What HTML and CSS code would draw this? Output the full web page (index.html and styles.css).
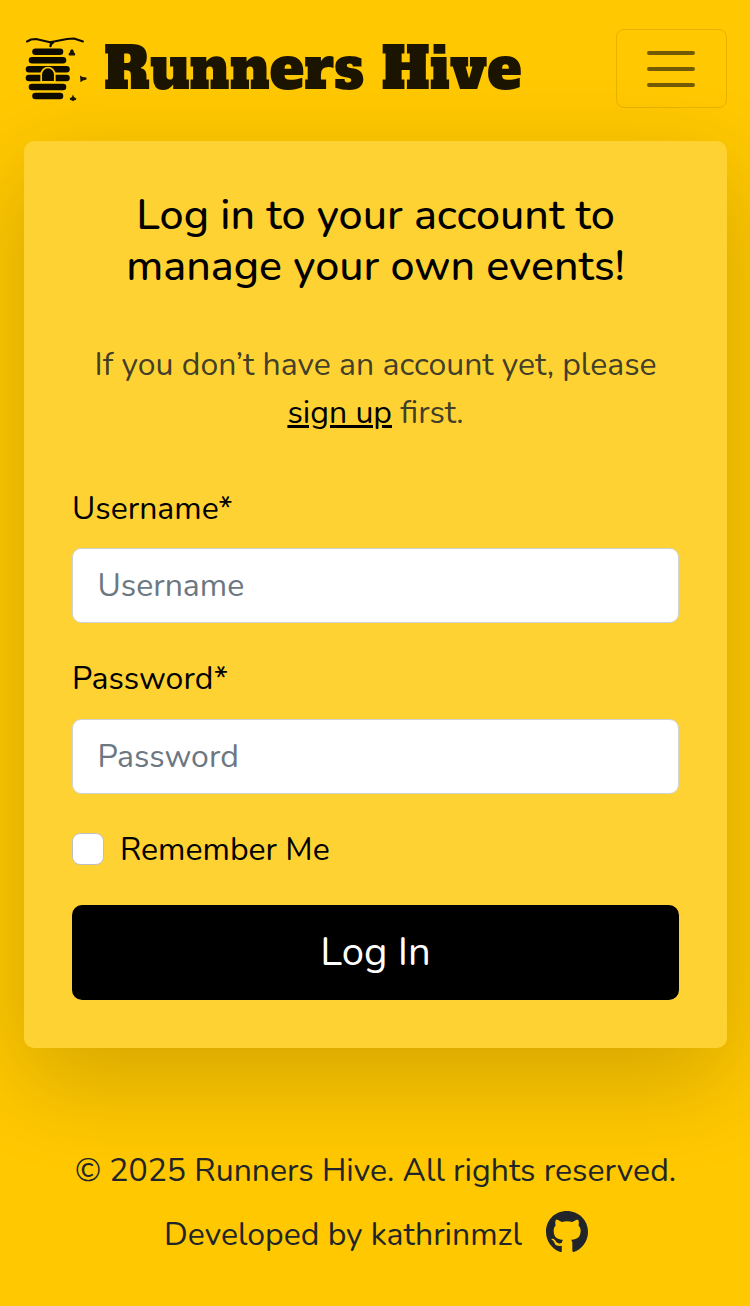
FILE: index.html
```html
<!DOCTYPE html>
<html lang="en">
<head>
<meta charset="utf-8">
<title>Runners Hive</title>
<link rel="stylesheet" href="styles.css">
</head>
<body>
<header class="navbar">
  <a class="brand">
    <svg class="hive" viewBox="0 0 64 68" width="64" height="68">
      <g fill="none" stroke="#0d0a00" stroke-linecap="round" stroke-linejoin="round">
        <path d="M3 6.500L7 4.500L12 4L26 7.300L43 4L50 3.500L59 6.500" stroke-width="2"/>
        <path d="M29 7.500L27 9L26.500 11" stroke-width="2.400"/>
        <path d="M11.500 16.700H36M8 25.300H39M5 34.300H42.500M5 43H42.500M8 52H39M11.500 61H36" stroke-width="6.600"/>
      </g>
      <path d="M17.200 46.800V39.500a6.800 7 0 0 1 13.600 0V46.800Z" fill="#0d0a00" stroke="#ffc800" stroke-width="1.700"/>
      <path d="M48 14l1.500 1.500.5 2 1.300 1.200-.5 1.800h-5.800l-.5-1.800 1.300-1.200.5-2ZM56 40.500l2.500 1.500 4 .5v2l-3.500 1-2.500 1.800ZM49 59.500l1 2.500 2.300 1.500-.5 1.500-1.500.3-1.300 1-1.300-1-1.500-.3-.5-1.500 2.300-1.500Z" fill="#1a1400"/>
    </svg>
    <span class="brand-name">Runners Hive</span>
  </a>
  <button class="toggler" aria-label="Menu">
    <svg viewBox="0 0 30 30" width="60" height="60"><path d="M4 7h22M4 15h22M4 23h22" stroke="#000" stroke-opacity=".55" stroke-linecap="round" stroke-width="2"/></svg>
  </button>
</header>
<main class="card">
  <h1 class="title">Log in to your account to<br>manage your own events!</h1>
  <p class="hint">If you don’t have an account yet, please<br><a class="link">sign up</a> first.</p>
  <label class="label user">Username*</label>
  <input class="input user" placeholder="Username">
  <label class="label pass">Password*</label>
  <input class="input pass" placeholder="Password">
  <div class="check"><span class="box"></span><span class="remember">Remember Me</span></div>
  <button class="submit"><span>Log In</span></button>
</main>
<footer class="footer">
  <p class="copy">© 2025 Runners Hive. All rights reserved.</p>
  <p class="dev"><span class="dev-text">Developed by kathrinmzl</span>
    <svg viewBox="0 0 496 496" width="42" height="42" fill="#212529"><path d="M165.900 389.400c0 2-2.300 3.600-5.200 3.600-3.300.3-5.600-1.300-5.600-3.600 0-2 2.300-3.600 5.200-3.600 3-.3 5.600 1.300 5.600 3.600zM244.800 0C106.100 0 0 105.300 0 244c0 110.900 69.800 205.800 169.500 239.200 12.800 2.300 17.300-5.600 17.300-12.100 0-6.200-.3-40.400-.3-61.400 0 0-70 15-84.700-29.800 0 0-11.400-29.100-27.800-36.600 0 0-22.900-15.700 1.600-15.400 0 0 24.900 2 38.600 25.800 21.900 38.600 58.600 27.500 72.900 20.900 2.300-16 8.800-27.100 16-33.700-55.900-6.200-112.300-14.300-112.300-110.500 0-27.500 7.600-41.300 23.600-58.900-2.600-6.500-11.100-33.300 2.600-67.900 20.900-6.500 69 27 69 27 20-5.600 41.500-8.500 62.800-8.500s42.800 2.900 62.800 8.500c0 0 48.100-33.600 69-27 13.700 34.700 5.200 61.400 2.600 67.900 16 17.700 25.800 31.500 25.800 58.900 0 96.500-58.900 104.200-114.800 110.500 9.200 7.900 17 22.900 17 46.400 0 33.700-.3 75.400-.3 83.600 0 6.500 4.600 14.400 17.300 12.100C428.200 449.800 496 354.900 496 244 496 105.300 383.500 0 244.800 0z"/></svg>
  </p>
</footer>
</body>
</html>
```

FILE: styles.css
```css
* { box-sizing: border-box; }
body {
  margin: 0;
  height: 1306px;
  background: #ffc800;
  color: #212529;
  font: 32px/48px Nunito, Lato, sans-serif;
  overflow: hidden;
}
h1, p { margin: 0; font-weight: 400; }
.navbar {
  height: 141px;
  padding: 29px 23px 0 24px;
  display: flex;
  justify-content: space-between;
  align-items: flex-start;
}
.brand { display: flex; padding-top: 6px; }
.hive { flex: none; }
.brand-name {
  margin-left: 16px;
  padding-top: 1px;
  font: 400 57.6px/66px "Alfa Slab One", "DejaVu Serif Condensed", "DejaVu Serif", serif;
  color: #1a1400;
  white-space: nowrap;
}
.toggler {
  width: 111px;
  height: 79px;
  padding: 0 1px 0 0;
  display: flex;
  align-items: center;
  justify-content: center;
  border: 1px solid rgba(0, 0, 0, .1);
  border-radius: 8px;
  background: none;
}
.card {
  margin: 0 23px 0 24px;
  height: 907px;
  padding: 48px;
  display: flex;
  flex-direction: column;
  background: #ffd233;
  border-radius: 10px;
  box-shadow: 0 32px 96px rgba(0, 0, 0, .175);
  color: #000;
}
.title { padding-top: 1px; font-size: 43px; line-height: 51px; font-weight: 500; text-align: center; white-space: nowrap; }
.hint { margin-top: 48.6px; text-align: center; color: rgba(33, 37, 41, .87); white-space: nowrap; }
.link { color: #000; text-decoration: underline; }
.label { margin-top: 48px; }
.label.pass { margin-top: 32px; }
.input {
  margin-top: 15.4px;
  height: 75px;
  width: 100%;
  flex: none;
  padding: 0 24.5px;
  border: 1px solid #d0d3d0;
  border-radius: 9px;
  background: #fff;
  font: inherit;
}
.input.pass { margin-top: 16px; }
.input::placeholder { color: #6c7782; opacity: 1; }
.check { margin-top: 32px; height: 48px; display: flex; align-items: center; }
.box { width: 32px; height: 32px; margin-top: -1px; border: 1px solid #bfc0c4; border-radius: 8px; background: #fff; }
.remember { margin-left: 16px; }
.submit {
  margin-top: 31.5px;
  height: 95px;
  flex: none;
  padding: 0 0 2px;
  border: 0;
  border-radius: 10px;
  background: #000;
  color: #fff;
  font: 40px/60px Nunito, Lato, sans-serif;
}
.footer { padding: 99px 0 0 1px; text-align: center; white-space: nowrap; }
.dev { margin-top: 16px; padding-left: 1px; display: flex; justify-content: center; align-items: center; gap: 24px; }
.dev svg { margin-top: -7px; }
```
